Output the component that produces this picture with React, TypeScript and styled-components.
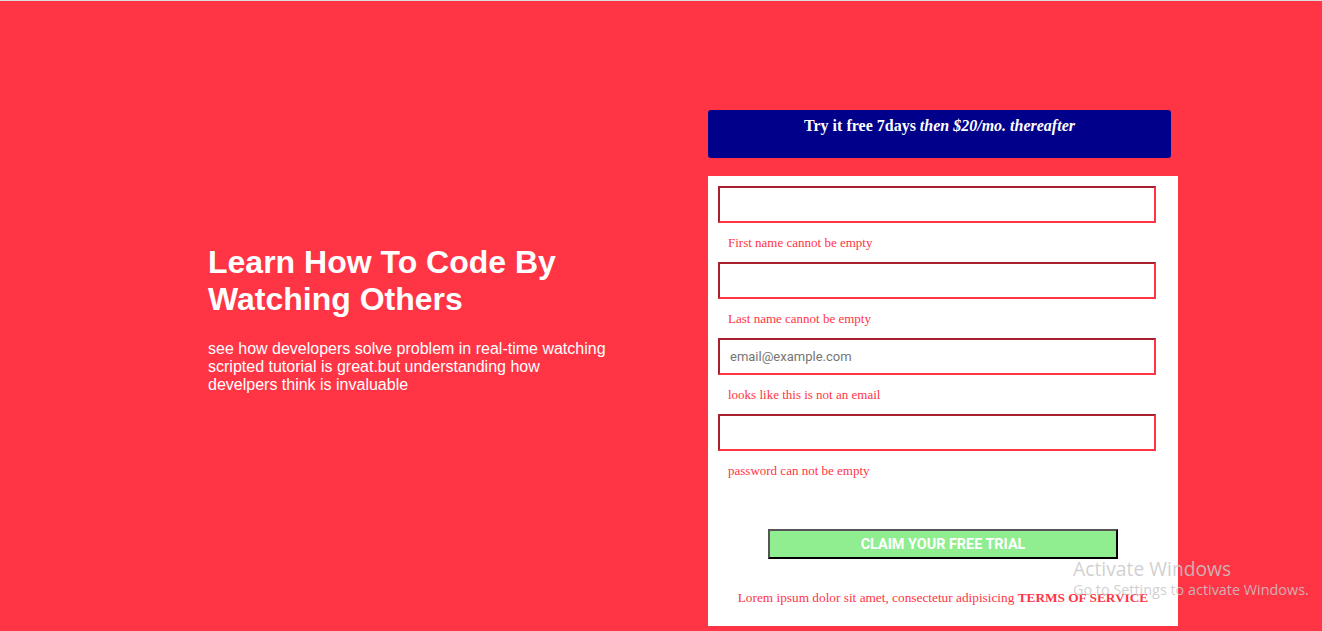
import React from "react";
import styled, { createGlobalStyle } from "styled-components";

const RED = "#ff3445";

const Global = createGlobalStyle`
  html, body { margin: 0; padding: 0; background: ${RED}; }
  * { box-sizing: border-box; }
`;

const Page = styled.div`
  position: relative;
  min-height: 631px;
  border-top: 1px solid #dcdcdc;
  background: ${RED};
  display: flex;
  align-items: flex-start;
  padding: 109px 0 0 208px;
  overflow: hidden;
`;

const Intro = styled.section`
  width: 500px;
  padding-top: 134px;
  color: #ffffff;
  font-family: "Liberation Sans", Arial, sans-serif;
`;

const Title = styled.h1`
  margin: 0;
  width: 402px;
  font-size: 32px;
  line-height: 37px;
  font-weight: 700;
`;

const Lead = styled.p`
  margin: 22px 0 0;
  width: 402px;
  font-size: 16px;
  line-height: 18px;
`;

const Side = styled.section`
  width: 470px;
  display: flex;
  flex-direction: column;
  gap: 18px;
`;

const Banner = styled.div`
  width: 463px;
  height: 48px;
  border-radius: 3px;
  background: #00008b;
  color: #ffffff;
  text-align: center;
  padding-top: 7px;
  font-family: "Liberation Serif", "Times New Roman", serif;
  font-size: 16px;
  font-weight: 700;
  line-height: 18px;
`;

const Card = styled.form`
  background: #ffffff;
  height: 450px;
  padding: 10px 22px 0 10px;
  display: flex;
  flex-direction: column;
`;

const Field = styled.input`
  display: block;
  width: 438px;
  height: 37px;
  margin: 0;
  padding: 0 10px;
  border: 2px solid;
  border-color: #a81f2d ${RED} ${RED} #a81f2d;
  background: #ffffff;
  font-family: Roboto, "Liberation Sans", Arial, sans-serif;
  font-size: 13px;
  outline: none;
  &::placeholder { color: #757575; }
`;

const ErrorText = styled.div`
  margin: 12px 0;
  padding-left: 10px;
  height: 15px;
  color: ${RED};
  font-family: "Liberation Serif", "Times New Roman", serif;
  font-size: 13px;
  line-height: 15px;
`;

const Submit = styled.button`
  align-self: center;
  margin: 39px 0 0 12px;
  width: 350px;
  height: 30px;
  padding: 0;
  background: #90ee90;
  border: 2px solid;
  border-color: #555555 #000000 #000000 #555555;
  color: #ffffff;
  font-family: Roboto, "Liberation Sans", Arial, sans-serif;
  font-weight: 700;
  font-size: 14.4px;
  text-transform: uppercase;
  cursor: pointer;
`;

const Terms = styled.p`
  margin: 31px 0 0 12px;
  text-align: center;
  color: ${RED};
  font-family: "Liberation Serif", "Times New Roman", serif;
  font-size: 13.3px;
  line-height: 15px;
  b { font-weight: 700; }
`;

const Watermark = styled.div`
  position: absolute;
  left: 1073px;
  top: 556px;
  color: rgba(200, 200, 200, 0.85);
  font-family: "Open Sans", "Noto Sans", sans-serif;
  pointer-events: none;
`;

const WmTitle = styled.div`
  font-size: 19.3px;
  line-height: 24px;
`;

const WmSub = styled.div`
  font-size: 14.4px;
  line-height: 18px;
`;

const fields = [
  { placeholder: "", error: "First name cannot be empty", type: "text" },
  { placeholder: "", error: "Last name cannot be empty", type: "text" },
  { placeholder: "email@example.com", error: "looks like this is not an email", type: "email" },
  { placeholder: "", error: "password can not be empty", type: "password" },
];

export default function App() {
  return (
    <>
      <Global />
      <Page>
        <Intro>
          <Title>Learn How To Code By Watching Others</Title>
          <Lead>
            see how developers solve problem in real-time watching scripted tutorial is great.but understanding how develpers think is invaluable
          </Lead>
        </Intro>
        <Side>
          <Banner>
            Try it free 7days <i>then $20/mo. thereafter</i>
          </Banner>
          <Card onSubmit={(e) => e.preventDefault()}>
            {fields.map((f, i) => (
              <React.Fragment key={i}>
                <Field type={f.type} placeholder={f.placeholder} />
                <ErrorText>{f.error}</ErrorText>
              </React.Fragment>
            ))}
            <Submit type="submit">Claim your free trial</Submit>
            <Terms>
              Lorem ipsum dolor sit amet, consectetur adipisicing <b>TERMS OF SERVICE</b>
            </Terms>
          </Card>
        </Side>
        <Watermark>
          <WmTitle>Activate Windows</WmTitle>
          <WmSub>Go to Settings to activate Windows.</WmSub>
        </Watermark>
      </Page>
    </>
  );
}
